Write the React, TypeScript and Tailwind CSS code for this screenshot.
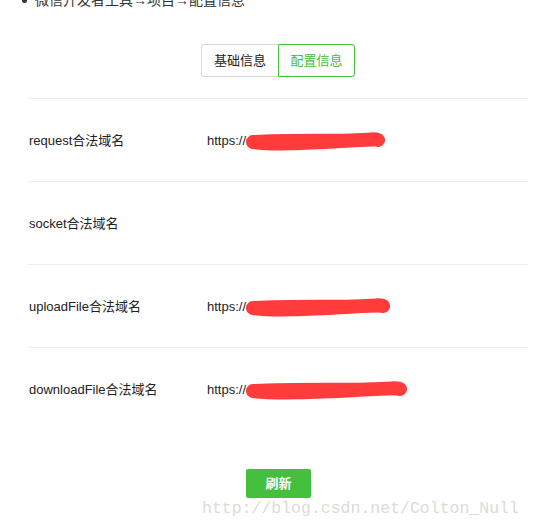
import React from 'react';

const rows = [
  { label: 'request合法域名', value: 'https://', w: 136 },
  { label: 'socket合法域名', value: '', w: 0 },
  { label: 'uploadFile合法域名', value: 'https://', w: 141 },
  { label: 'downloadFile合法域名', value: 'https://', w: 158 },
];

function Scribble({ w }: { w: number }) {
  // red marker covering the hidden domain
  return (
    <svg width={w + 4} height="22" viewBox={`0 0 ${w + 4} 22`}>
      <path
        d={`M7 12 C ${w * 0.2} 15, ${w * 0.45} 13, ${w * 0.7} 11 S ${w * 0.95} 9, ${w - 4} 10`}
        stroke="#ff3b3b"
        strokeWidth="14"
        strokeLinecap="round"
        fill="none"
      />
      <path
        d={`M9 9 C ${w * 0.3} 7, ${w * 0.6} 8, ${w * 0.9} 8`}
        stroke="#ff3b3b"
        strokeWidth="8"
        strokeLinecap="round"
        fill="none"
      />
    </svg>
  );
}

export default function App() {
  return (
    <div
      className="relative w-[533px] h-[528px] bg-white overflow-hidden text-[#222]"
      style={{ fontFamily: '"Liberation Sans", Arial, "Noto Sans CJK SC", sans-serif' }}
    >
      {/* cut-off heading */}
      <div className="flex items-center gap-[8px] pl-[22px] -mt-[9px] h-[18px] text-[14px] text-[#333]">
        <span className="w-[5px] h-[5px] rounded-full bg-[#333]" />
        <span>微信开发者工具→项目→配置信息</span>
      </div>

      {/* tabs */}
      <div className="flex justify-center mt-[35px] ml-[23px]">
        <div className="h-[33px] w-[77px] flex items-center justify-center border border-[#d9d9d9] border-r-0 rounded-l-[3px] text-[13px] text-[#222]">
          基础信息
        </div>
        <div className="h-[33px] w-[77px] flex items-center justify-center border border-[#44c03c] rounded-r-[3px] text-[13px] text-[#44c03c]">
          配置信息
        </div>
      </div>

      {/* domain rows */}
      <div className="ml-[28px] mr-[5px] mt-[21px]">
        {rows.map((r) => (
          <div key={r.label} className="h-[83px] flex items-center text-[13px] border-t border-[#eeeeee]">
            <div className="w-[179px] pl-[1px] pt-[2px]">{r.label}</div>
            {r.value && (
              <div className="flex items-center pt-[2px]">
                <span>{r.value}</span>
                <Scribble w={r.w} />
              </div>
            )}
          </div>
        ))}
      </div>

      <div className="flex mt-[39px] pl-[246px]">
        <button className="w-[65px] h-[29px] bg-[#45c03d] text-white text-[13px] font-bold rounded-[2px]">刷新</button>
      </div>

      {/* watermark */}
      <div
        className="absolute left-[202px] top-[497px] text-[16.5px] text-[#dcdcd4]"
        style={{ fontFamily: '"Liberation Mono", "Courier New", monospace' }}
      >
        http://blog.csdn.net/Colton_Null
      </div>
    </div>
  );
}
